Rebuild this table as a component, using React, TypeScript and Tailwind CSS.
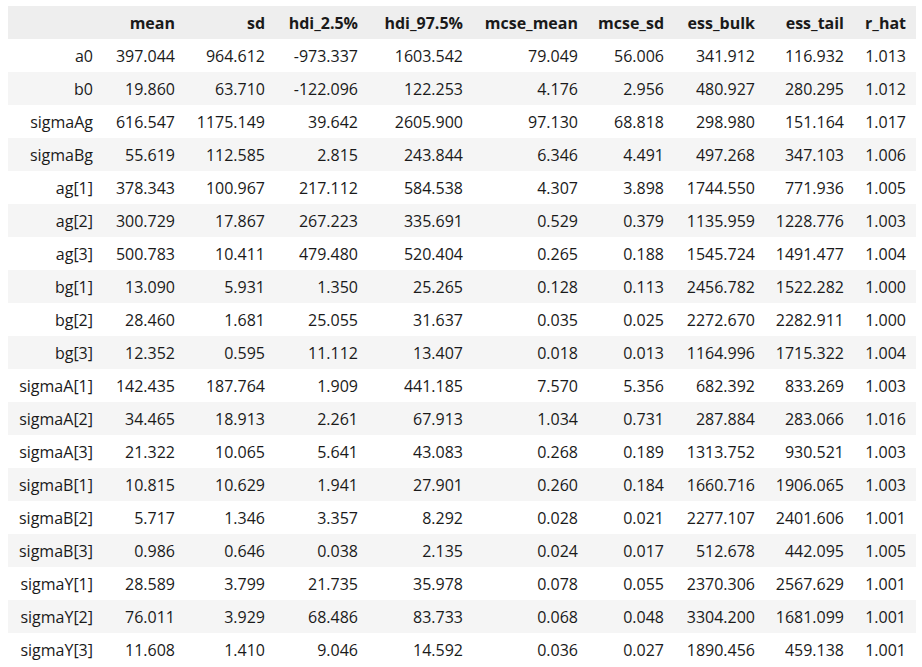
import React from "react";

const cols = ["mean", "sd", "hdi_2.5%", "hdi_97.5%", "mcse_mean", "mcse_sd", "ess_bulk", "ess_tail", "r_hat"];

const rows: [string, string[]][] = [
  ["a0", ["397.044", "964.612", "-973.337", "1603.542", "79.049", "56.006", "341.912", "116.932", "1.013"]],
  ["b0", ["19.860", "63.710", "-122.096", "122.253", "4.176", "2.956", "480.927", "280.295", "1.012"]],
  ["sigmaAg", ["616.547", "1175.149", "39.642", "2605.900", "97.130", "68.818", "298.980", "151.164", "1.017"]],
  ["sigmaBg", ["55.619", "112.585", "2.815", "243.844", "6.346", "4.491", "497.268", "347.103", "1.006"]],
  ["ag[1]", ["378.343", "100.967", "217.112", "584.538", "4.307", "3.898", "1744.550", "771.936", "1.005"]],
  ["ag[2]", ["300.729", "17.867", "267.223", "335.691", "0.529", "0.379", "1135.959", "1228.776", "1.003"]],
  ["ag[3]", ["500.783", "10.411", "479.480", "520.404", "0.265", "0.188", "1545.724", "1491.477", "1.004"]],
  ["bg[1]", ["13.090", "5.931", "1.350", "25.265", "0.128", "0.113", "2456.782", "1522.282", "1.000"]],
  ["bg[2]", ["28.460", "1.681", "25.055", "31.637", "0.035", "0.025", "2272.670", "2282.911", "1.000"]],
  ["bg[3]", ["12.352", "0.595", "11.112", "13.407", "0.018", "0.013", "1164.996", "1715.322", "1.004"]],
  ["sigmaA[1]", ["142.435", "187.764", "1.909", "441.185", "7.570", "5.356", "682.392", "833.269", "1.003"]],
  ["sigmaA[2]", ["34.465", "18.913", "2.261", "67.913", "1.034", "0.731", "287.884", "283.066", "1.016"]],
  ["sigmaA[3]", ["21.322", "10.065", "5.641", "43.083", "0.268", "0.189", "1313.752", "930.521", "1.003"]],
  ["sigmaB[1]", ["10.815", "10.629", "1.941", "27.901", "0.260", "0.184", "1660.716", "1906.065", "1.003"]],
  ["sigmaB[2]", ["5.717", "1.346", "3.357", "8.292", "0.028", "0.021", "2277.107", "2401.606", "1.001"]],
  ["sigmaB[3]", ["0.986", "0.646", "0.038", "2.135", "0.024", "0.017", "512.678", "442.095", "1.005"]],
  ["sigmaY[1]", ["28.589", "3.799", "21.735", "35.978", "0.078", "0.055", "2370.306", "2567.629", "1.001"]],
  ["sigmaY[2]", ["76.011", "3.929", "68.486", "83.733", "0.068", "0.048", "3304.200", "1681.099", "1.001"]],
  ["sigmaY[3]", ["11.608", "1.410", "9.046", "14.592", "0.036", "0.027", "1890.456", "459.138", "1.001"]],
];

export default function App() {
  return (
    <div className="min-h-[667px] bg-white pl-2 pt-[6px] text-[16px] text-[#1a1a1a]" style={{ fontFamily: '"Open Sans", "Noto Sans", sans-serif' }}>
      <table className="table-fixed border-collapse w-[908px]">
        <colgroup>
          <col className="w-[95px]" />
          <col className="w-[82px]" />
          <col className="w-[90px]" />
          <col className="w-[93px]" />
          <col className="w-[105px]" />
          <col className="w-[115px]" />
          <col className="w-[86px]" />
          <col className="w-[91px]" />
          <col className="w-[89px]" />
          <col className="w-[62px]" />
        </colgroup>
        <thead>
          <tr className="h-[33px] bg-[#eeeeee]">
            <th className="p-0"></th>
            {cols.map((c) => (
              <th key={c} className="p-0 pr-[10px] text-right font-bold whitespace-nowrap leading-none">
                {c}
              </th>
            ))}
          </tr>
        </thead>
        <tbody>
          {rows.map(([name, vals], i) => (
            <tr key={name} className={i % 2 === 1 ? "h-[33px] bg-[#f5f5f5]" : "h-[33px] bg-white"}>
              <th className="p-0 pr-[10px] text-right font-normal whitespace-nowrap leading-none">{name}</th>
              {vals.map((v, j) => (
                <td key={j} className="p-0 pr-[10px] text-right whitespace-nowrap leading-none">
                  {v}
                </td>
              ))}
            </tr>
          ))}
        </tbody>
      </table>
    </div>
  );
}
